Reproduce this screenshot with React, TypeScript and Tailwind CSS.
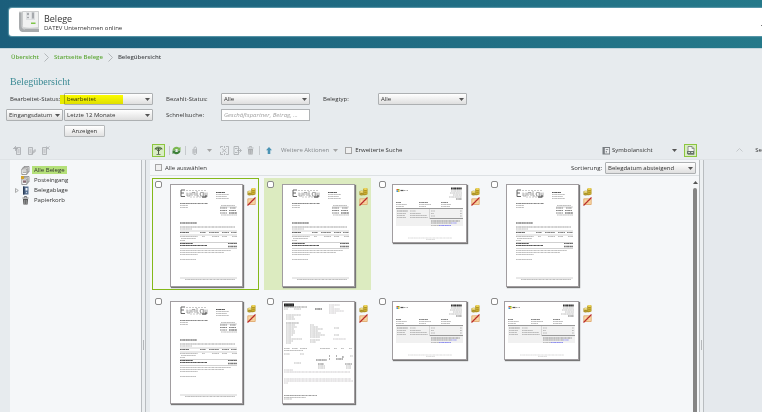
import type { ReactNode } from "react";
import { clsx } from "clsx";

function Caret({ className }: { className?: string }) {
  return (
    <svg viewBox="0 0 5 3" className={clsx("h-[3px] w-[5px] shrink-0", className ?? "text-[#555]")} fill="currentColor" aria-hidden="true">
      <path d="M0 0h5L2.5 3z" />
    </svg>
  );
}

function Dropdown({ id, label, options }: { id: string; label?: string; options: string[] }) {
  return (
    <div className="relative w-full">
      <select
        id={id}
        aria-label={label}
        className="block h-3 w-full appearance-none rounded-[1px] border border-[#adb0b2] bg-linear-to-b from-white to-[#dfdfdf] pr-2 pl-[2px] text-[6px] leading-[10px] text-[#333]"
      >
        {options.map((option) => (
          <option key={option}>{option}</option>
        ))}
      </select>
      <Caret className="pointer-events-none absolute top-[5px] right-[3px] text-[#555]" />
    </div>
  );
}

function Check({ id, label, round }: { id: string; label?: string; round?: boolean }) {
  return (
    <input
      id={id}
      type="checkbox"
      aria-label={label}
      className={clsx(
        "block size-[7px] shrink-0 appearance-none border checked:bg-[#84b81a]",
        round ? "rounded-[2px] border-[#8b8b8b] bg-white" : "border-[#a5a5a5] bg-[#f0f0f0]"
      )}
    />
  );
}

function Separator() {
  return <span className="h-[9px] w-px shrink-0 bg-[#c6cacd]" />;
}

function IconButton({ label, active, children }: { label: string; active?: boolean; children: ReactNode }) {
  return (
    <button
      type="button"
      aria-label={label}
      className={clsx(
        "flex shrink-0 items-center justify-center",
        active ? "size-[13px] border border-[#8cc63f] bg-[#d9edc3]" : "h-[13px] w-[9px]"
      )}
    >
      {children}
    </button>
  );
}

const icon = "size-[9px] shrink-0";

function TreeIcon() {
  return (
    <svg viewBox="0 0 9 9" className={icon} fill="none" aria-hidden="true">
      <path d="M.5 2.800 2 1.200 4 .6l2.500.3L8.500 2.500 7 3.500H2z" fill="#6c8a5c" />
      <path d="M.8 3.200l1.400-.8M8.300 3.200l-1.400-.8M2.500 3.500l2 1.700 2-1.700M4.500 2v6" stroke="#43503c" strokeWidth=".9" />
      <path d="M2.500 8.500h4" stroke="#43503c" strokeWidth=".7" />
    </svg>
  );
}

function RefreshIcon() {
  return (
    <svg viewBox="0 0 9 9" className={icon} fill="none" aria-hidden="true">
      <path d="M.5 4.300C.8 2 2.500.8 4.500.8c1 0 2 .4 2.600 1L8.500 1v3.500H4.800l1.200-1.200C4.800 2.400 3 3 2.500 4.500z" fill="#7cb852" />
      <path d="M8.500 4.700C8.200 7 6.500 8.200 4.500 8.200c-1 0-2-.4-2.600-1L.5 8V4.500h3.700L3 5.700C4.200 6.600 6 6 6.500 4.500z" fill="#3c8038" />
    </svg>
  );
}

function ClipIcon() {
  return (
    <svg viewBox="0 0 9 9" className={icon} fill="none" stroke="#aeb1b3" aria-hidden="true">
      <path d="M3 3v4c0 2 3.500 2 3.500 0V2.500c0-2-2.500-2-2.500 0v4c0 .8 1.200.8 1.200 0V3" strokeWidth=".9" />
    </svg>
  );
}

function SplitIcon() {
  return (
    <svg viewBox="0 0 9 9" className={icon} fill="none" stroke="#a9acaf" strokeWidth=".8" aria-hidden="true">
      <path d="M.5 2V.5H3M6 .5h2.500v8H6M3 8.500H.5V6M2 2.500l4.500 4M6.500 2.500 2 6.500M4.500 0v2M4.500 7v2" />
    </svg>
  );
}

function ExportIcon() {
  return (
    <svg viewBox="0 0 9 9" className={icon} fill="none" stroke="#a6a9ac" strokeWidth=".8" aria-hidden="true">
      <path d="M1 .5h4.500v8H1zM2 2.500h2.500M2 6.500h2.500" />
      <path d="M4 4.500h4M6.500 2.500l2 2-2 2" />
    </svg>
  );
}

function TrashIcon({ dark }: { dark?: boolean }) {
  return (
    <svg viewBox="0 0 9 9" className={clsx(icon, dark ? "text-[#555]" : "text-[#a9acae]")} fill="none" aria-hidden="true">
      <path d="M2 3h5l-.4 5.500H2.400z" fill="currentColor" />
      <path d="M1.500 2h6M3.500 1.500V.5h2v1" stroke="currentColor" strokeWidth=".8" />
      <path d="M3.700 4v4M5.300 4v4" stroke="#d8dbdd" strokeWidth=".5" />
    </svg>
  );
}

function EditPageIcon({ kind }: { kind: "new" | "edit" | "delete" }) {
  return (
    <svg viewBox="0 0 9 9" className={icon} fill="none" stroke="#a8abae" strokeWidth=".8" aria-hidden="true">
      <path d={kind === "new" ? "M3.500 1.500h4v7h-4z" : "M1.500 1.500h4v7h-4z"} fill="#dfe2e4" />
      <path d={kind === "new" ? "M4.500 4h2M4.500 6h2" : "M2.500 4h2M2.500 6h2"} />
      {kind === "new" && <path d="M0 2.500h5M2.500 0v5M1 1l3 3" />}
      {kind === "edit" && <path d="M5 8l.5-2L8 3.500l1 1L6.500 7z" fill="#c9cccf" />}
      {kind === "delete" && <path d="M5 .5l3.500 3M8.500.5 5 3.500" />}
    </svg>
  );
}

function PagesIcon({ inbox }: { inbox?: boolean }) {
  return (
    <svg viewBox="0 0 9 9" className={icon} fill="#fafafa" stroke="#777" strokeWidth=".7" aria-hidden="true">
      <path d="M3 .5h5V6H3z" />
      <path d="M1.800 1.700h5v5.500h-5z" />
      <path d="M.8 3h5v5.500h-5z" />
      <path d="M2 5h3M2 6.500h3" stroke="#8d8d8d" />
      {inbox && <path d="M0 0h3v3H0z" fill="#d2a32c" stroke="none" />}
      {inbox && <path d="M2 4.500h3v2H2z" fill="#8d6a72" stroke="none" />}
    </svg>
  );
}

function BinderIcon() {
  return (
    <svg viewBox="0 0 9 9" className={icon} aria-hidden="true">
      <path d="M2 .5h5.500v8H2z" fill="#566f90" />
      <path d="M2 .5h1.500v8H2z" fill="#2c3e58" />
      <path d="M4.500 2h2v2.500h-2z" fill="#eef3f8" />
      <circle cx="5.500" cy="6.500" r=".7" fill="#c8d5e4" />
    </svg>
  );
}

function SymbolIcon() {
  return (
    <svg viewBox="0 0 9 9" className={icon} aria-hidden="true">
      <path d="M.5 1h7.500v7.500H.5z" fill="#777c80" />
      <path d="M2.800 2h4.400v5.500H2.800z" fill="#eceef0" />
      <path d="M3.800 3h2.400v.8H3.800zM3.800 5h1v1.500h-1z" fill="#777c80" />
    </svg>
  );
}

function PreviewIcon() {
  return (
    <svg viewBox="0 0 9 9" className={icon} fill="none" aria-hidden="true">
      <path d="M2 .5h4l2 2v6H2z" fill="#f5f6f4" stroke="#757e77" strokeWidth=".8" />
      <path d="M1 5h7v3H1z" fill="#69746d" />
      <path d="M2.200 6.500h1.800M5.200 6.500H7" stroke="#e7eee3" strokeWidth=".9" />
      <path d="M6 .5v2h2" stroke="#757e77" strokeWidth=".7" />
    </svg>
  );
}

function CoinsIcon() {
  return (
    <svg viewBox="0 0 9 9" className={icon} fill="none" aria-hidden="true">
      <path d="M4.200 2.200C4.200.7 8.500.5 8.500 1.800V7c0 1-2.300 1.500-4.300 1z" fill="#b3961f" />
      <path d="M.5 4.800c0-1.400 4.300-1.400 4.300 0v2.700c0 1.200-4.300 1.200-4.300 0z" fill="#9c841e" />
      <ellipse cx="6.400" cy="2" rx="1.900" ry=".9" fill="#f0d75c" />
      <ellipse cx="2.700" cy="4.900" rx="1.900" ry=".9" fill="#f5e28a" />
      <path d="M5 4.300c1 .4 2.400.3 3.200-.2M5 6.200c1 .4 2.400.3 3.200-.2M.8 6.800c1 .5 2.700.5 3.800 0" stroke="#e0c84e" strokeWidth=".6" />
    </svg>
  );
}

function UnpostedIcon() {
  return (
    <svg viewBox="0 0 9 9" className={icon} fill="none" aria-hidden="true">
      <path d="M.8 1.800h7.400v5.700H.8z" fill="#fad9a8" stroke="#dda265" strokeWidth=".8" />
      <path d="M2 5.800h4.500M3.500 3.500H7" stroke="#e5b980" strokeWidth=".7" />
      <path d="M.5 8.500l8-8" stroke="#b8282a" strokeWidth="1.100" />
    </svg>
  );
}

type Line = [x: number, y: number, width: number, height?: number, color?: string];

function Lines({ lines }: { lines: Line[] }) {
  return (
    <g fill="none">
      {lines.map(([x, y, width, height = 0.7, color = "#a2a2a2"], i) => (
        <path key={i} d={`M${x} ${y}h${width}`} stroke={color} strokeWidth={height} strokeDasharray="1.700 .3 .8 .3 2.400 .4 1.100 .2" />
      ))}
    </g>
  );
}

const invoiceLines: Line[] = [
  [45, 7.500, 9, 1, "#555"], [45, 9.500, 13], [45, 11.500, 11], [45, 13.500, 13],
  [9, 18.500, 28, 1, "#888"], [9, 20.500, 8], [9, 22.500, 8],
  [50, 20.500, 14], [49, 23, 7, 1, "#888"], [59, 23, 6, 1, "#888"], [49, 25.500, 7, 1, "#888"], [58, 25.500, 7, 1, "#888"],
  [49, 28, 7, 1, "#888"], [58, 28, 8, 1.500, "#888"], [50, 30, 16],
  [9, 38, 17, 1.200, "#444"], [9, 42, 55, 0.8, "#888"], [9, 44, 12],
  [9, 47.500, 9, 1, "#666"], [29, 47.500, 6, 0.8, "#666"], [38, 47.500, 10, 0.8, "#666"], [51, 47.500, 7, 0.8, "#666"], [60, 47.500, 6, 0.8, "#666"],
  [9, 51.500, 18], [31, 51.500, 3], [41, 51.500, 7], [51, 51.500, 5], [61, 51.500, 5], [10, 53.500, 15], [9, 55.500, 5],
  [9, 58.500, 13, 1.100, "#555"], [57, 58.500, 9, 1.100, "#666"], [9, 60.500, 27, 1.100, "#555"], [57, 61.500, 9, 1.600, "#777"],
  [9, 65.500, 51], [9, 67.500, 44], [9, 69.500, 18], [9, 74.500, 16],
  [14, 94.500, 50],
];

function InvoiceThumb() {
  return (
    <svg viewBox="0 0 71 101" className="h-[101px] w-[71px]" aria-hidden="true">
      <Lines lines={invoiceLines} />
      <g fill="none" stroke="#8a8a8a" strokeWidth=".7">
        <path d="M10 5v6.500h4M10 5h4M10 8h3" stroke="#555" strokeWidth=".9" />
        <path d="M16 7.500V11h3V7.500M21 11V7.500h3V11M26 6v5h2M29.500 7.500h3V11h-3zM34 11V7.500M36 7.500V12h-4" />
        <path d="M15 5.500h20M16 9h19M19 12h13" strokeDasharray="2 1" stroke="#b0b0b0" />
        <path d="M9 46h57M9 50h57M9 57.500h57M9 63.500h57M9 93h57M49 22h17" strokeWidth=".4" />
        <path d="M31 12h4v-2" strokeWidth="1" stroke="#444" />
      </g>
    </svg>
  );
}

const licenceLines: Line[] = [
  [58, 3.500, 11, 2, "#333"], [58, 6, 11], [57, 8, 12], [60, 10, 9], [56, 12, 13], [63, 14, 6, 1, "#777"],
  [3, 17.500, 5, 0.8, "#666"], [26, 17.500, 9, 0.8, "#666"], [48, 17.500, 7, 0.8, "#666"],
  [3, 19.500, 11], [26, 19.500, 12], [48, 19.500, 10], [3, 21.500, 8], [26, 21.500, 7], [48, 21.500, 9],
  [4, 26, 11, 0.8, "#888"], [17, 26, 6], [38, 26, 4], [67, 26, 2],
  [4, 28.500, 9], [17, 28.500, 11], [38, 28.500, 3], [67, 28.500, 2],
  [4, 30.500, 8], [17, 30.500, 17], [4, 32.500, 9], [17, 32.500, 18], [38, 31, 4], [67, 31, 2],
  [38, 36, 29, 0.8, "#777"], [38, 38, 20, 0.8, "#888"], [58, 38, 6, 0.8, "#8585ee"],
  [46, 40.500, 12, 0.8, "#7474ee"], [38, 40.500, 8], [15, 53, 44, 0.6, "#c4c4c4"], [33, 54.500, 9, 0.6, "#c4c4c4"],
];

function LicenceThumb() {
  return (
    <svg viewBox="0 0 73 57" className="h-[57px] w-[73px]" aria-hidden="true">
      <path d="M3 23h67v18H3z" fill="#f1f1f1" />
      <path d="M3 23.500h67M37 33.500h33" stroke="#9a9a9a" strokeWidth="1" />
      <path d="M36.500 24v10" stroke="#bbb" strokeWidth=".5" />
      <path d="M3.500 4h1.500v1.500H3.500z" fill="#e0552d" />
      <path d="M5 4h1.500v1.500H5z" fill="#7cb52e" />
      <path d="M3.500 5.500h1.500V7H3.500z" fill="#3299d8" />
      <path d="M5 5.500h1.500V7H5z" fill="#efb524" />
      <path d="M7.500 5.500h3" stroke="#555" strokeWidth="1.200" />
      <path d="M11 5.500h4" stroke="#aaa" strokeDasharray="1 .5" />
      <Lines lines={licenceLines} />
    </svg>
  );
}

const faded = "#b9b4b7";
const statementLines: Line[] = [
  [1, 5, 23, 0.8, "#777"], [1, 7, 4], [11, 7, 7], [32, 7, 7, 1.100, "#444"], [46, 3, 11, 0.7, faded], [46, 5, 5, 0.7, faded], [46, 7, 11, 0.7, faded], [46, 9, 15, 0.7, faded], [46, 11, 7, 0.7, faded],
  [3, 13, 15], [3, 15, 8], [3, 17, 9], [3, 21, 13, 0.8, "#888"], [3, 23, 9], [27, 23, 4], [3, 25, 11], [27, 25, 8], [3, 27, 8], [27, 27, 13], [51, 26, 5], [3, 29, 9], [27, 29, 8],
  [3, 31, 9], [27, 31, 11], [3, 33, 7], [27, 33, 15], [51, 33, 5], [3, 35, 5], [27, 35, 10], [3, 37, 16], [27, 38, 10], [50, 37, 13, 0.7, faded], [3, 39, 7], [27, 40, 6], [3, 41, 5],
  [1, 46.500, 6], [9, 46.500, 6], [17, 46.500, 7], [37, 46.500, 10], [51, 46.500, 3], [58, 46.500, 3], [66, 46.500, 3], [1, 48.500, 19], [1, 52, 6], [17, 52, 4],
  [46, 54, 1, 1.200, "#666"], [53, 54, 1, 1.200, "#666"], [59, 55, 2, 1.200, "#666"], [67, 54, 3], [33, 58, 11, 1, "#666"], [46, 57, 1, 1.200, "#666"], [53, 57, 7, 1, "#666"],
  [11, 61, 7], [35, 62, 6, 0.9, "#666"], [62, 62, 7, 0.9, "#777"], [35, 64, 7], [63, 64, 5], [35, 66, 7], [63, 66, 5],
  [1, 68, 9, 0.7, faded], [1, 70, 66, 0.7, faded], [1, 77, 67, 0.7, faded], [1, 79, 69, 0.7, faded], [1, 81, 4, 0.7, faded],
  [1, 93.500, 33, 0.8, "#888"], [1, 95.500, 22], [1, 97, 8],
];

function StatementThumb() {
  return (
    <svg viewBox="0 0 71 101" className="h-[101px] w-[71px]" aria-hidden="true">
      <path d="M1 1.500h10v3H1z" fill="#1d1d1d" />
      <path d="M2 3h8" stroke="#888" strokeWidth=".7" strokeDasharray="1 .4" />
      <Lines lines={statementLines} />
    </svg>
  );
}

const thumbs = { invoice: InvoiceThumb, licence: LicenceThumb, statement: StatementThumb };

type Receipt = { id: number; kind: keyof typeof thumbs; state?: "selected" | "marked" };

const receipts: Receipt[] = [
  { id: 1, kind: "invoice", state: "selected" },
  { id: 2, kind: "invoice", state: "marked" },
  { id: 3, kind: "licence" },
  { id: 4, kind: "invoice" },
  { id: 5, kind: "invoice" },
  { id: 6, kind: "statement" },
  { id: 7, kind: "licence" },
  { id: 8, kind: "licence" },
];

function ReceiptTile({ id, kind, state }: Receipt) {
  const Thumb = thumbs[kind];
  return (
    <li
      className={clsx(
        "flex h-28 w-[107px] items-start border p-[2px]",
        state === "selected" ? "border-[#84b81a]" : "border-transparent",
        state === "marked" && "bg-[#dcebc0]"
      )}
    >
      <Check id={`receipt-${id}`} label={`Beleg ${id}`} round />
      <div className="mt-[3px] flex flex-1 items-start justify-end pr-1">
        <div className="border border-[#a19da0] bg-white shadow-[1px_1px_1px_#777]">
          <Thumb />
        </div>
      </div>
      <div className="mt-[6px] flex flex-col gap-px">
        <CoinsIcon />
        <UnpostedIcon />
      </div>
    </li>
  );
}

function Splitter() {
  return (
    <div className="flex w-[5px] shrink-0 items-center justify-center border-x border-[#b9bdc0] bg-[#edf0f2]">
      <span className="mt-[118px] h-[10px] w-px bg-[#b5b8bb]" />
    </div>
  );
}

function Header() {
  return (
    <header className="h-[49px] shrink-0 border-b border-[#c4d5dc] bg-linear-to-r from-[#1b5e7b] to-[#25798a] pt-2 pl-[9px]">
      <div className="flex h-7 items-center rounded-l-[3px] bg-white pl-[9px] shadow-[0_0_1px_1px_#5d98aa]">
        <svg viewBox="0 0 22 22" className="size-[22px]" aria-hidden="true">
          <path d="M1 1v15c0 4 2 5 4 5h16v-3H7c-2 0-3-1-3-3V1z" fill="#a8abad" />
          <path d="M1 1h3v14c0 2 1 3 3 3" fill="none" stroke="#d5d7d8" />
          <path d="M4.500.5h16v17H7c-2 0-2.500-1-2.500-3z" fill="#f0f1f1" stroke="#b8babc" strokeWidth=".7" />
          <path d="M8 .8h9V9H8z" fill="#dddfe1" />
          <path d="M9 2h2v2H9zM9 6h2v1H9zM14 1.500h2v6h-2z" fill="#a6a9ad" />
          <path d="M12 1v7" stroke="#f7f7f7" />
          <path d="M13 11.500h4.500V13H13z" fill="#7fc548" />
          <path d="M5 16c4 1 9 1 15.500 0v1.500H7z" fill="#cfd1d2" />
        </svg>
        <div className="pl-[4px] text-[#333]">
          <div className="text-[9px] leading-[11px]">Belege</div>
          <div className="text-[6px] leading-[8px]">DATEV Unternehmen online</div>
        </div>
        <span className="mt-[6px] ml-auto h-px w-px bg-[#777]" />
      </div>
    </header>
  );
}

function Chevron() {
  return (
    <svg viewBox="0 0 5 9" className="h-[9px] w-[5px]" fill="none" stroke="#b3b7ba" aria-hidden="true">
      <path d="M.5.5l4 4-4 4" />
    </svg>
  );
}

function Breadcrumb() {
  return (
    <nav aria-label="Brotkrumen" className="flex h-4 items-center gap-[5px] pl-[11px] text-[6px] font-semibold">
      <a href="#uebersicht" className="text-[#5fa838]">Übersicht</a>
      <Chevron />
      <a href="#belege" className="text-[#5fa838]">Startseite Belege</a>
      <Chevron />
      <span className="text-[#4a4d50]">Belegübersicht</span>
    </nav>
  );
}

function Filters() {
  return (
    <form className="grid auto-rows-[12px] grid-cols-[58px_89px_68px_89px_68px_89px] items-center gap-y-1 pl-[6px]">
      <label htmlFor="status" className="pl-[4px] whitespace-nowrap">Bearbeitet-Status:</label>
      <div className="relative">
        <Dropdown id="status" options={["bearbeitet"]} />
        <span className="pointer-events-none absolute top-[2px] -left-1 h-[9px] w-[63px] bg-[#ffff00] mix-blend-multiply" />
      </div>
      <label htmlFor="paid" className="pl-[13px]">Bezahlt-Status:</label>
      <Dropdown id="paid" options={["Alle"]} />
      <label htmlFor="type" className="pl-[13px]">Belegtyp:</label>
      <Dropdown id="type" options={["Alle"]} />

      <div className="pr-px">
        <Dropdown id="date-kind" label="Datumsart" options={["Eingangsdatum"]} />
      </div>
      <Dropdown id="period" label="Zeitraum" options={["Letzte 12 Monate"]} />
      <label htmlFor="search" className="pl-[13px]">Schnellsuche:</label>
      <input
        id="search"
        type="text"
        placeholder="Geschäftspartner, Betrag, ..."
        className="h-3 w-full border border-[#b0b3b5] bg-white px-[2px] text-[6px] italic placeholder:text-[#a0a0a0]"
      />

      <button
        type="button"
        className="col-start-2 row-start-3 h-3 w-[41px] rounded-[1px] border border-[#b5b8ba] bg-linear-to-b from-white to-[#e2e2e2] text-[6px] leading-[10px]"
      >
        Anzeigen
      </button>
    </form>
  );
}

function Toolbar() {
  return (
    <div className="flex h-[18px] shrink-0 items-center">
      <div className="flex w-[150px] shrink-0 gap-[5px] pl-[13px]">
        <IconButton label="Neu"><EditPageIcon kind="new" /></IconButton>
        <IconButton label="Bearbeiten"><EditPageIcon kind="edit" /></IconButton>
        <IconButton label="Löschen"><EditPageIcon kind="delete" /></IconButton>
      </div>
      <div className="flex min-w-0 flex-1 items-center gap-1 pl-[2px]">
        <IconButton label="Baum anzeigen" active><TreeIcon /></IconButton>
        <div className="flex items-center gap-[2px]">
          <Separator />
          <IconButton label="Aktualisieren"><RefreshIcon /></IconButton>
        </div>
        <Separator />
        <IconButton label="Anhängen"><ClipIcon /></IconButton>
        <div className="px-1">
          <Caret className="text-[#a5a5a5]" />
        </div>
        <IconButton label="Trennen"><SplitIcon /></IconButton>
        <IconButton label="Exportieren"><ExportIcon /></IconButton>
        <IconButton label="Papierkorb"><TrashIcon /></IconButton>
        <Separator />
        <IconButton label="Hochladen">
          <svg viewBox="0 0 9 9" className={icon} aria-hidden="true">
            <path d="M5 1 8 4.200H6.300V8H3.700V4.200H2z" fill="#4a93b4" />
          </svg>
        </IconButton>
        <button type="button" className="flex items-center gap-[4px] pl-1 whitespace-nowrap text-[#85898c]">
          Weitere Aktionen
          <Caret className="text-[#a5a5a5]" />
        </button>
        <div className="flex items-center gap-[3px] pl-[3px]">
          <Check id="advanced" />
          <label htmlFor="advanced" className="whitespace-nowrap">Erweiterte Suche</label>
        </div>
        <button type="button" className="ml-auto flex w-[75px] items-center gap-px">
          <SymbolIcon />
          Symbolansicht
          <Caret className="ml-auto text-[#555]" />
        </button>
        <div className="pr-[6px] pl-[3px]">
          <IconButton label="Vorschau" active><PreviewIcon /></IconButton>
        </div>
      </div>
      <div className="flex w-[59px] shrink-0 items-center justify-between overflow-hidden pl-[33px]">
        <svg viewBox="0 0 7 4" className="h-1 w-[7px]" fill="none" stroke="#c4c8cb" aria-hidden="true">
          <path d="M.5 3.500l3-3 3 3" />
        </svg>
        <span>Se</span>
      </div>
    </div>
  );
}

const folders = [
  { name: "Alle Belege", icon: <PagesIcon />, selected: true },
  { name: "Posteingang", icon: <PagesIcon inbox /> },
  { name: "Belegablage", icon: <BinderIcon />, expandable: true },
  { name: "Papierkorb", icon: <TrashIcon dark /> },
];

function Folders() {
  return (
    <ul className="ml-[10px] w-[131px] shrink-0 bg-[#f5f7f9] pt-[5px]">
      {folders.map((folder) => (
        <li key={folder.name} className="flex h-[10px] items-center pl-[5px]">
          <span className="w-[6px]">
            {folder.expandable && (
              <svg viewBox="0 0 4 5" className="h-[5px] w-1" fill="none" stroke="#999" strokeWidth=".8" aria-hidden="true">
                <path d="M.5.5l2.800 2-2.800 2z" />
              </svg>
            )}
          </span>
          {folder.icon}
          <a
            href={`#${folder.name}`}
            className={clsx("ml-[2px] px-[2px] leading-[8px]", folder.selected && "bg-[#b4e079]")}
          >
            {folder.name}
          </a>
        </li>
      ))}
    </ul>
  );
}

export default function App() {
  return (
    <div className="flex h-screen flex-col overflow-hidden bg-[#e7ebee] font-['Open_Sans','Noto_Sans',sans-serif] text-[6px] leading-[8px] text-[#333]">
      <Header />
      <Breadcrumb />
      <h1 className="mt-[11px] mb-[5px] pl-[10px] font-['Liberation_Serif',serif] text-[10px] leading-[12px] text-[#3b8a94]">
        Belegübersicht
      </h1>
      <Filters />
      <div className="h-1 shrink-0" />
      <Toolbar />
      <div className="flex min-h-0 flex-1 border-t border-[#dfe3e6]">
        <Folders />
        <Splitter />
        <main className="ml-1 flex min-w-0 flex-1 flex-col bg-[#f5f7f9]">
          <div className="flex h-4 shrink-0 items-center justify-between border-b border-[#dde1e4] pr-[3px] pl-[5px]">
            <div className="flex items-center gap-[3px]">
              <Check id="all" />
              <label htmlFor="all">Alle auswählen</label>
            </div>
            <div className="flex items-center gap-[3px]">
              <label htmlFor="sort">Sortierung:</label>
              <div className="w-[91px]">
                <Dropdown id="sort" options={["Belegdatum absteigend"]} />
              </div>
            </div>
          </div>
          <div className="flex min-h-0 flex-1">
            <ul className="flex min-w-0 flex-1 flex-wrap content-start gap-[5px] overflow-hidden pt-[2px] pl-[2px]">
              {receipts.map((receipt) => (
                <ReceiptTile key={receipt.id} {...receipt} />
              ))}
            </ul>
            <div className="flex w-[8px] shrink-0 flex-col items-center gap-[4px] pt-[5px]">
              <Caret className="rotate-180 text-[#555]" />
              <span className="w-[4px] flex-1 rounded-t-[2px] bg-[#858585]" />
            </div>
          </div>
        </main>
        <Splitter />
        <aside className="w-[58px] shrink-0 bg-[#e5e9ed]" />
      </div>
    </div>
  );
}
